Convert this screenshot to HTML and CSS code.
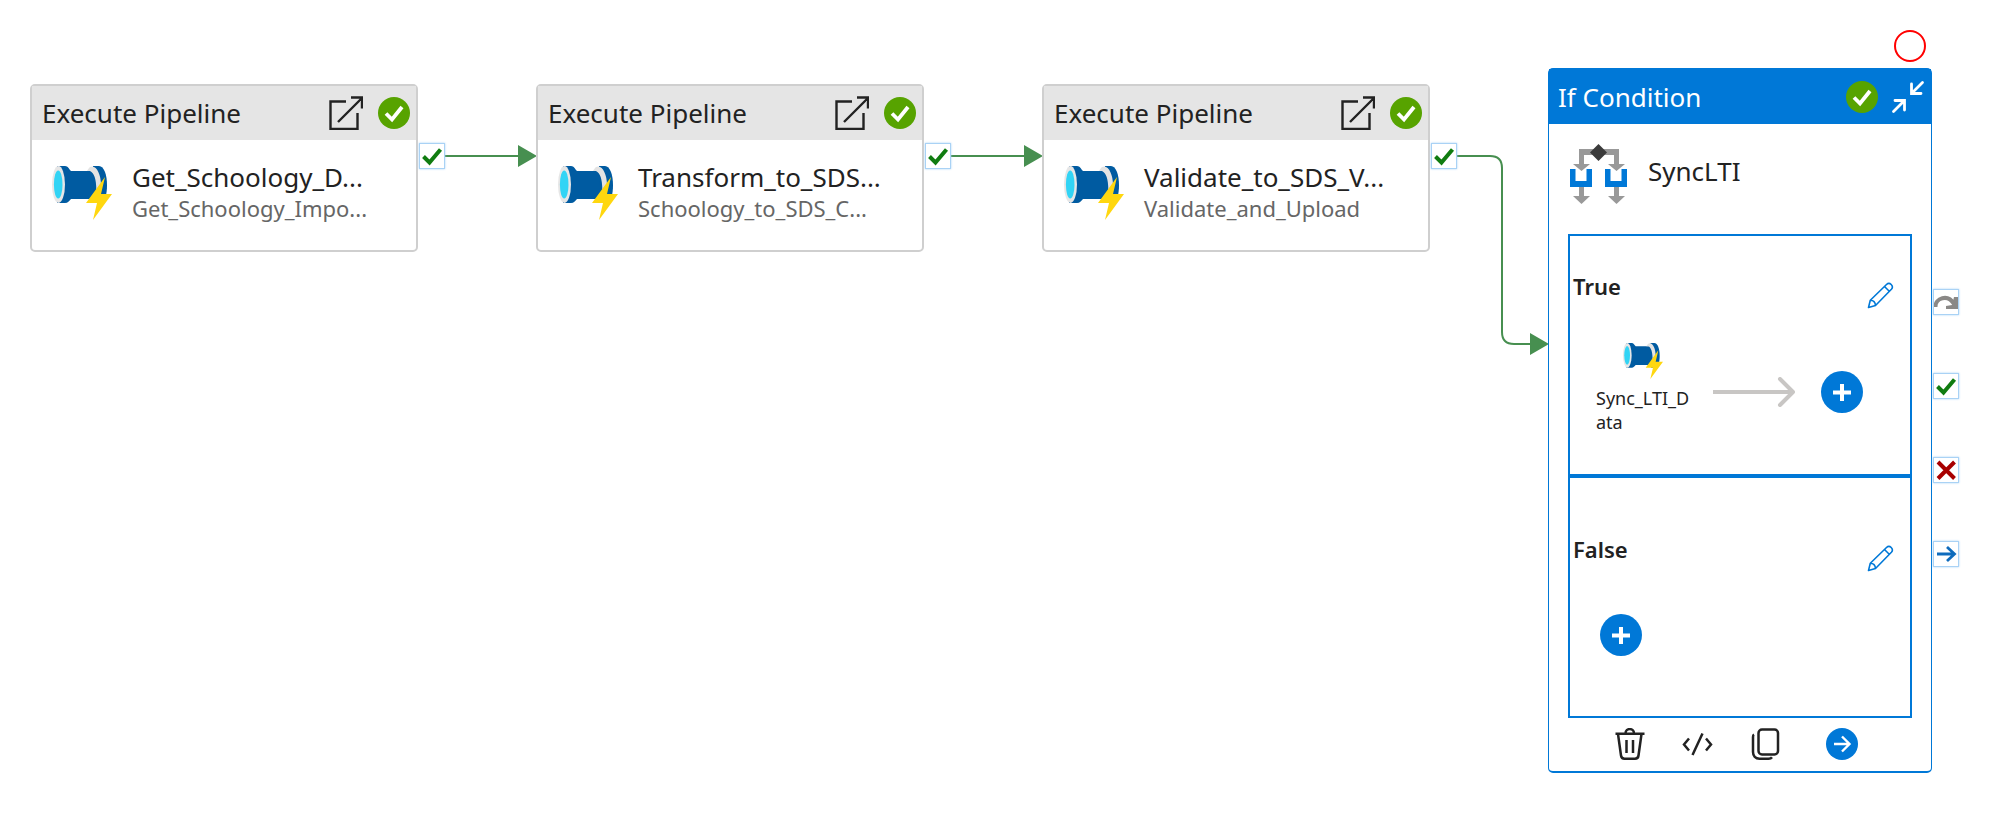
FILE: index.html
```html
<!DOCTYPE html>
<html lang="en">
<head>
<meta charset="utf-8">
<title>Pipeline canvas</title>
<link rel="stylesheet" href="styles.css">
</head>
<body>
<svg class="defs" aria-hidden="true">
  <symbol id="open" viewBox="0 0 34 34">
    <path d="M17 5.500H1.500V33h27V17" fill="none" stroke="#222" stroke-width="2.400"/>
    <path d="M9 26 32.500 2.500M22 1.500h11v11" fill="none" stroke="#222" stroke-width="2.400"/>
  </symbol>
  <symbol id="ok" viewBox="0 0 32 32">
    <circle cx="16" cy="16" r="16" fill="#57a300"/>
    <path d="m8 16.500 6 6L24 10" fill="none" stroke="#fff" stroke-width="3.800"/>
  </symbol>
  <symbol id="pipe" viewBox="0 0 60 54">
    <path d="M5 0h8c3 0 4 3 6 5h27v28H19c-2 2-3 4-6 4H5z" fill="#005ba1"/>
    <path d="M41 0h6c5 0 8 9 8 19s-2 15-5 18h-8z" fill="#005ba1"/>
    <path d="M38 1c6-3 11 7 11 18l-2 9-3-1c1-10-1-20-6-22h-3c1-2 2-3 3-4z" fill="#e3e3e3"/>
    <ellipse cx="6.500" cy="18.500" rx="6.500" ry="18.500" fill="#e6e6e6"/>
    <ellipse cx="6.200" cy="18.500" rx="4.300" ry="14" fill="#32d4f5"/>
    <path d="M53 11 34 37h11l-4 17 19-26H49z" fill="#ffd70f"/>
  </symbol>
  <symbol id="branch" viewBox="0 0 58 60">
    <path d="M9 5h40v15h6l-8.500 7L38 20h6v-9H14v9h6l-8.500 7L3 20h6zM9 42h5v10h6l-8.500 8L3 52h6zM44 42h5v10h6l-8.500 8L38 52h6z" fill="#999"/>
    <path d="M0 25h5.500v12h11V25H22v18H0zM35 25h5.500v12h11V25H57v18H35z" fill="#0078d7"/>
    <path d="m28.500 0 8.500 8.500-8.500 8.500L20 8.500z" fill="#3b3b3b"/>
  </symbol>
  <symbol id="pencil" viewBox="0 0 27 27">
    <path d="m1.500 25.500 1.800-7.300L19.500 2.500c3.200-3 7.700 1.400 4.900 4.800L8.500 23.500zM17.500 4.500l5 5M3.300 18.200c3 0 5 2 5.200 5.300" fill="none" stroke="#0078d7" stroke-width="1.600" stroke-linejoin="round"/>
  </symbol>
  <symbol id="plus" viewBox="0 0 42 42">
    <circle cx="21" cy="21" r="21" fill="#0078d7"/>
    <path d="M12 21.500h18M21 13v17" stroke="#fff" stroke-width="4"/>
  </symbol>
  <symbol id="tick" viewBox="0 0 24 24">
    <path d="m3.500 12.500 6 6L20.500 5.500" fill="none" stroke="#107c10" stroke-width="4"/>
  </symbol>
</svg>

<main class="canvas">
  <svg class="wires" aria-hidden="true">
    <g fill="none" stroke="#478f50" stroke-width="2">
      <path d="M444 156h76M950 156h76M1456 156h34q12 0 12 12v164q0 12 12 12h18"/>
    </g>
    <path d="M518 145l19 11-19 11zM1024 145l19 11-19 11zM1530 333l19 11-19 11z" fill="#478f50"/>
  </svg>

  <article class="node node-get">
    <header class="node-head">
      <h2 class="kind">Execute Pipeline</h2>
      <button class="icon-btn" aria-label="Open pipeline"><svg class="i-open"><use href="#open"/></svg></button>
      <svg class="i-status"><use href="#ok"/></svg>
    </header>
    <div class="node-body">
      <svg class="i-pipe"><use href="#pipe"/></svg>
      <div class="label"><p class="name">Get_Schoology_D...</p><p class="ref">Get_Schoology_Impo...</p></div>
    </div>
    <div class="ports"><button class="port" aria-label="On success"><svg><use href="#tick"/></svg></button></div>
  </article>

  <article class="node node-transform">
    <header class="node-head">
      <h2 class="kind">Execute Pipeline</h2>
      <button class="icon-btn" aria-label="Open pipeline"><svg class="i-open"><use href="#open"/></svg></button>
      <svg class="i-status"><use href="#ok"/></svg>
    </header>
    <div class="node-body">
      <svg class="i-pipe"><use href="#pipe"/></svg>
      <div class="label"><p class="name">Transform_to_SDS...</p><p class="ref">Schoology_to_SDS_C...</p></div>
    </div>
    <div class="ports"><button class="port" aria-label="On success"><svg><use href="#tick"/></svg></button></div>
  </article>

  <article class="node node-validate">
    <header class="node-head">
      <h2 class="kind">Execute Pipeline</h2>
      <button class="icon-btn" aria-label="Open pipeline"><svg class="i-open"><use href="#open"/></svg></button>
      <svg class="i-status"><use href="#ok"/></svg>
    </header>
    <div class="node-body">
      <svg class="i-pipe"><use href="#pipe"/></svg>
      <div class="label"><p class="name">Validate_to_SDS_V...</p><p class="ref">Validate_and_Upload</p></div>
    </div>
    <div class="ports"><button class="port" aria-label="On success"><svg><use href="#tick"/></svg></button></div>
  </article>

  <button class="breakpoint" aria-label="Set breakpoint"></button>

  <article class="node node-if">
    <header class="node-head">
      <h2 class="kind">If Condition</h2>
      <svg class="i-status"><use href="#ok"/></svg>
      <button class="icon-btn" aria-label="Collapse"><svg class="i-collapse" viewBox="0 0 34 34" fill="none" stroke="#fff" stroke-width="2.800" stroke-linecap="round"><path d="M31.500 2.500 21 13M20.500 4v9.500H30M2.500 31.500 13 21M4 20.500h9.500V30"/></svg></button>
    </header>
    <div class="if-title">
      <svg class="i-branch"><use href="#branch"/></svg>
      <p class="name">SyncLTI</p>
    </div>
    <div class="branches">
      <section class="branch">
        <div class="branch-head"><h3 class="case">True</h3><button class="icon-btn" aria-label="Edit True activities"><svg class="i-pencil"><use href="#pencil"/></svg></button></div>
        <div class="steps">
          <div class="step"><svg class="i-pipe-sm"><use href="#pipe"/></svg><p class="step-name">Sync_LTI_Data</p></div>
          <svg class="i-next" viewBox="0 0 82 30" fill="none" stroke="#c8c6c4" stroke-width="4" stroke-linejoin="round"><path d="M0 15h80"/><path d="m67 2 13 13-13 13" stroke-linecap="round"/></svg>
          <button class="icon-btn" aria-label="Add activity to True"><svg class="i-plus"><use href="#plus"/></svg></button>
        </div>
      </section>
      <section class="branch branch-empty">
        <div class="branch-head"><h3 class="case">False</h3><button class="icon-btn" aria-label="Edit False activities"><svg class="i-pencil"><use href="#pencil"/></svg></button></div>
        <div class="steps">
          <button class="icon-btn" aria-label="Add activity to False"><svg class="i-plus"><use href="#plus"/></svg></button>
        </div>
      </section>
    </div>
    <footer class="tools">
      <button class="icon-btn" aria-label="Delete"><svg class="i-tool" viewBox="0 0 32 32" fill="none" stroke="#222" stroke-width="2.500"><path d="M1.500 5.800h29M11.500 5.500c0-5.900 8.500-5.900 8.500 0M4 6l3 21.500c.3 2.500 1.500 3.200 3.500 3.200h10.500c2 0 3.200-.7 3.500-3.200L27.500 6M12.500 12v13M19 12v13"/></svg></button>
      <button class="icon-btn" aria-label="View code"><svg class="i-tool" viewBox="0 0 32 32" fill="none" stroke="#222" stroke-width="2.500"><path d="M7 10.500 2 16.500l5 6M24 10.500l5 6-5 6M20.500 5.500l-10 21.500"/></svg></button>
      <button class="icon-btn" aria-label="Clone"><svg class="i-tool" viewBox="0 0 32 32" fill="none" stroke="#222" stroke-width="2.500"><rect x="8.500" y="1.500" width="19.500" height="25" rx="3.500"/><path d="M4 6.500c-1 .5-1 1.500-1 2.500v15c0 4 2.500 6.700 6.500 6.700h9c2 0 3-.7 3.500-1.400"/></svg></button>
      <button class="icon-btn" aria-label="Add output"><svg class="i-tool" viewBox="0 0 32 32" fill="none" stroke="#fff" stroke-width="2.400"><circle cx="16" cy="16" r="16" fill="#0078d7" stroke="none"/><path d="M8 16h15M16 8.500l7.500 7.500-7.500 7.500"/></svg></button>
    </footer>
    <div class="ports">
      <button class="port" aria-label="On skip"><svg viewBox="0 0 24 24"><path d="M1.500 17C1 8 14 3.500 20 14" fill="none" stroke="#8a8886" stroke-width="4"/><path d="M24 7v12H12v-3l6-1 2-8z" fill="#8a8886"/></svg></button>
      <button class="port" aria-label="On success"><svg><use href="#tick"/></svg></button>
      <button class="port" aria-label="On failure"><svg viewBox="0 0 24 24"><path d="m4 4 16.500 16.500M20.500 4 4 20.500" stroke="#a80000" stroke-width="4"/></svg></button>
      <button class="port" aria-label="On completion"><svg viewBox="0 0 24 24" fill="none" stroke="#0f6cbd" stroke-width="2.800"><path d="M3 12h17M13 5l7.500 7-7.500 7"/></svg></button>
    </div>
  </article>
</main>
</body>
</html>
```
FILE: styles.css
```css
* { box-sizing: border-box; }

body {
  margin: 0;
  background: #fff;
  color: #222;
  font-family: "Noto Sans", "Open Sans", sans-serif;
}

h2, h3, p { margin: 0; font-weight: 400; }
svg { display: block; flex: none; }
.defs { position: absolute; width: 0; height: 0; }

.icon-btn {
  display: block;
  flex: none;
  padding: 0;
  border: 0;
  background: none;
  cursor: pointer;
}

/* Free canvas: nodes and wires sit at their saved positions. */
.canvas { position: relative; min-height: 100vh; overflow: hidden; }
.wires { position: absolute; inset: 0; width: 100%; height: 100%; }

.node {
  position: absolute;
  width: 388px;
  border: 2px solid #cfcfcf;
  border-radius: 5px;
  background: #fff;
}
.node-get { left: 30px; top: 84px; }
.node-transform { left: 536px; top: 84px; }
.node-validate { left: 1042px; top: 84px; }

.node-head {
  display: flex;
  align-items: center;
  height: 54px;
  padding: 0 6px 0 10px;
  gap: 15px;
  background: #e5e5e5;
}
.kind { flex: 1; font-size: 26px; line-height: 36px; white-space: nowrap; }

.node-body { display: flex; gap: 20px; height: 110px; padding: 19px 20px 0; }
.label { min-width: 0; white-space: nowrap; }
.name { font-size: 26px; line-height: 36px; }
.ref { color: #666; font-size: 22px; line-height: 26px; }

.i-open { width: 34px; height: 34px; }
.i-status { width: 32px; height: 32px; }
.i-pipe { width: 60px; height: 54px; margin-top: 7px; }
.i-collapse { width: 34px; height: 34px; }
.i-branch { width: 58px; height: 60px; }
.i-pencil { width: 27px; height: 27px; }
.i-pipe-sm { width: 40px; height: 36px; }
.i-next { width: 82px; height: 30px; }
.i-plus { width: 42px; height: 42px; }
.i-tool { width: 32px; height: 32px; }

/* Ports hang off the node's right edge. */
.ports {
  position: absolute;
  left: 100%;
  top: 57px;
  display: flex;
  flex-direction: column;
  gap: 58px;
  padding-left: 3px;
}
.port {
  width: 26px;
  height: 26px;
  padding: 0;
  border: 1px solid #a9d2f5;
  background: #fff;
  box-shadow: 0 0 2px #a9d2f5;
  cursor: pointer;
}
.port svg { width: 24px; height: 24px; }

.breakpoint {
  position: absolute;
  left: 1894px;
  top: 30px;
  width: 32px;
  height: 32px;
  padding: 0;
  border: 2px solid #f00;
  border-radius: 50%;
  background: #fff;
}

.node-if {
  left: 1548px;
  top: 68px;
  width: 384px;
  border: 1px solid #0078d7;
  border-bottom-width: 2px;
}
.node-if .node-head { height: 55px; padding-left: 9px; gap: 13px; background: #0078d7; color: #fff; }
.node-if .ports { top: 220px; padding-left: 2px; }

.if-title { display: flex; gap: 20px; height: 110px; padding: 20px 20px 0 21px; }
.if-title .name { padding-top: 9px; }

.branches { margin: 0 19px; }
.branch { height: 242px; border: 2px solid #0078d7; }
.branch-head {
  display: flex;
  align-items: flex-end;
  justify-content: space-between;
  height: 73px;
  padding: 0 16px 0 3px;
}
.case { padding-bottom: 7px; font-size: 22px; font-weight: 600; line-height: 32px; }
.steps { display: flex; align-items: center; padding: 34px 47px 0 26px; }
.step { width: 100px; padding-bottom: 6px; }
.i-pipe-sm { margin-left: 27px; }
.step-name { padding-top: 7px; font-size: 18px; line-height: 24px; word-break: break-all; }
.i-next { margin: 0 26px 0 17px; }
.branch-empty .branch-head { height: 94px; }
.branch-empty .steps { padding: 42px 30px 0; }

.tools { display: flex; gap: 36px; padding: 10px 65px 11px; }
.tools .icon-btn:last-child { margin-left: 8px; }
```
